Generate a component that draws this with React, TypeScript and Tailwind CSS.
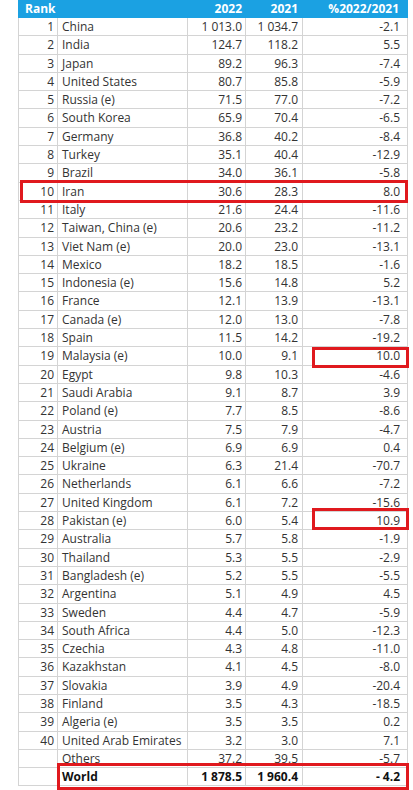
import React, { FC } from 'react'

type Row = [string, string, string, string, string]

const rows: Row[] = [
  ['1', 'China', '1 013.0', '1 034.7', '-2.1'],
  ['2', 'India', '124.7', '118.2', '5.5'],
  ['3', 'Japan', '89.2', '96.3', '-7.4'],
  ['4', 'United States', '80.7', '85.8', '-5.9'],
  ['5', 'Russia (e)', '71.5', '77.0', '-7.2'],
  ['6', 'South Korea', '65.9', '70.4', '-6.5'],
  ['7', 'Germany', '36.8', '40.2', '-8.4'],
  ['8', 'Turkey', '35.1', '40.4', '-12.9'],
  ['9', 'Brazil', '34.0', '36.1', '-5.8'],
  ['10', 'Iran', '30.6', '28.3', '8.0'],
  ['11', 'Italy', '21.6', '24.4', '-11.6'],
  ['12', 'Taiwan, China (e)', '20.6', '23.2', '-11.2'],
  ['13', 'Viet Nam (e)', '20.0', '23.0', '-13.1'],
  ['14', 'Mexico', '18.2', '18.5', '-1.6'],
  ['15', 'Indonesia (e)', '15.6', '14.8', '5.2'],
  ['16', 'France', '12.1', '13.9', '-13.1'],
  ['17', 'Canada (e)', '12.0', '13.0', '-7.8'],
  ['18', 'Spain', '11.5', '14.2', '-19.2'],
  ['19', 'Malaysia (e)', '10.0', '9.1', '10.0'],
  ['20', 'Egypt', '9.8', '10.3', '-4.6'],
  ['21', 'Saudi Arabia', '9.1', '8.7', '3.9'],
  ['22', 'Poland (e)', '7.7', '8.5', '-8.6'],
  ['23', 'Austria', '7.5', '7.9', '-4.7'],
  ['24', 'Belgium (e)', '6.9', '6.9', '0.4'],
  ['25', 'Ukraine', '6.3', '21.4', '-70.7'],
  ['26', 'Netherlands', '6.1', '6.6', '-7.2'],
  ['27', 'United Kingdom', '6.1', '7.2', '-15.6'],
  ['28', 'Pakistan (e)', '6.0', '5.4', '10.9'],
  ['29', 'Australia', '5.7', '5.8', '-1.9'],
  ['30', 'Thailand', '5.3', '5.5', '-2.9'],
  ['31', 'Bangladesh (e)', '5.2', '5.5', '-5.5'],
  ['32', 'Argentina', '5.1', '4.9', '4.5'],
  ['33', 'Sweden', '4.4', '4.7', '-5.9'],
  ['34', 'South Africa', '4.4', '5.0', '-12.3'],
  ['35', 'Czechia', '4.3', '4.8', '-11.0'],
  ['36', 'Kazakhstan', '4.1', '4.5', '-8.0'],
  ['37', 'Slovakia', '3.9', '4.9', '-20.4'],
  ['38', 'Finland', '3.5', '4.3', '-18.5'],
  ['39', 'Algeria (e)', '3.5', '3.5', '0.2'],
  ['40', 'United Arab Emirates', '3.2', '3.0', '7.1'],
  ['', 'Others', '37.2', '39.5', '-5.7'],
  ['', 'World', '1 878.5', '1 960.4', '- 4.2'],
]

const cols = 'grid grid-cols-[39px_130px_58px_57px_100px]'

const TableRow: FC<{ row: Row; bold?: boolean }> = ({ row, bold }) => (
  <div className={`${cols} h-[18.3px] border-b border-[#d4d4d4] ${bold ? 'font-bold text-[#111]' : ''}`}>
    <div className="border-r border-[#d4d4d4] pr-[3px] text-right">{row[0]}</div>
    <div className="border-r border-[#d4d4d4] pl-[4px] whitespace-nowrap">{row[1]}</div>
    <div className="border-r border-[#d4d4d4] pr-[3px] text-right">{row[2]}</div>
    <div className="border-r border-[#d4d4d4] pr-[4px] text-right">{row[3]}</div>
    <div className="pr-[3px] text-right">{row[4]}</div>
  </div>
)

export default function App() {
  return (
    <div className="relative h-[790px] w-[413px] overflow-hidden bg-white pl-[18px] font-['Open_Sans',sans-serif] text-[12px] leading-[18px] text-[#333]">
      <div className="w-[390px]">
        <div className={`${cols} h-[18px] bg-[#1ba1e2] font-bold text-white`}>
          <div className="pl-[7px]">Rank</div>
          <div />
          <div className="pr-[3px] text-right">2022</div>
          <div className="pr-[4px] text-right">2021</div>
          <div className="pr-[3px] text-right">%2022/2021</div>
        </div>
        <div className="border-x border-[#d4d4d4]">
          {rows.map((r, i) => (
            <TableRow key={i} row={r} bold={i === rows.length - 1} />
          ))}
        </div>
      </div>

      {/* highlight boxes drawn over the table */}
      <div className="absolute left-[20px] top-[180px] h-[23px] w-[388px] border-[3px] border-[#e0191e]" />
      <div className="absolute left-[312px] top-[347px] h-[21px] w-[97px] border-[3px] border-[#e0191e]" />
      <div className="absolute left-[312px] top-[508px] h-[22px] w-[97px] border-[3px] border-[#e0191e]" />
      <div className="absolute left-[57px] top-[763px] h-[27px] w-[352px] border-[3px] border-[#e0191e]" />
    </div>
  )
}
